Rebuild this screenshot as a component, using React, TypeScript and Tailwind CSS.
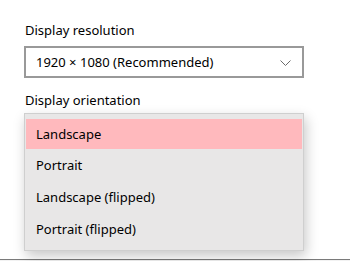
import React from "react";

export default function App() {
  const items = ["Landscape", "Portrait", "Landscape (flipped)", "Portrait (flipped)"];
  return (
    <div
      className="w-[350px] h-[261px] bg-white flex flex-col overflow-hidden text-black"
      style={{ fontFamily: '"Noto Sans", "Open Sans", sans-serif' }}
    >
      <div className="flex-1 pl-6 pt-[20px] flex flex-col">
        <div className="text-[13px] leading-[20px] pl-[1px]">Display resolution</div>
        <div className="mt-[6px] w-[280px] h-[32px] border-2 border-[#999999] flex items-center justify-between pl-[10px] pr-[11px]">
          <span className="text-[13px] leading-[20px]">1920 × 1080 (Recommended)</span>
          <svg width="11" height="6" viewBox="0 0 11 6" className="mt-[1px]">
            <path d="M0.5 0.5 L5.5 5.5 L10.5 0.5" fill="none" stroke="#6b6b6b" strokeWidth="1" />
          </svg>
        </div>
        <div className="mt-[12px] text-[13px] leading-[20px] pl-[1px]">Display orientation</div>
        <div className="relative">
          <div className="absolute left-0 top-[3px] w-[280px] h-[138px] bg-[#e8e7e7] border border-[#cfcfcf] shadow-[2px_5px_12px_rgba(0,0,0,0.22)] pt-[5px] px-[1px]">
            {items.map((t, i) => (
              <div
                key={t}
                className={
                  "flex items-center pl-[10px] text-[13px] leading-[20px] " +
                  (i === 0 ? "h-[30px] bg-[#ffb9bd]" : "h-[32px]")
                }
              >
                {t}
              </div>
            ))}
          </div>
        </div>
      </div>
      <div className="h-[1px] bg-[#7a7a7a]" />
      <div className="h-[1px] bg-[#f2f2f2]" />
    </div>
  );
}
